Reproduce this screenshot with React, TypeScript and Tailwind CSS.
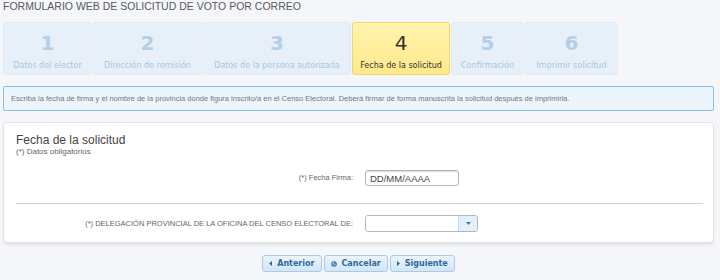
const steps = [
  { n: '1', label: 'Datos del elector', w: 'w-[89px]' },
  { n: '2', label: 'Dirección de remisión', w: 'w-[109px]' },
  { n: '3', label: 'Datos de la persona autorizada', w: 'w-[148px]' },
  { n: '4', label: 'Fecha de la solicitud', w: 'w-[98px]', active: true },
  { n: '5', label: 'Confirmación', w: 'w-[73px]' },
  { n: '6', label: 'Imprimir solicitud', w: 'w-[93px]' },
];

const arial = { fontFamily: '"Liberation Sans", Arial, sans-serif' };
const verdana = { fontFamily: '"DejaVu Sans", Verdana, sans-serif' };

function NavButton({ icon, label }: { icon: React.ReactNode; label: string }) {
  return (
    <button
      className="h-[17px] flex items-center gap-[5px] px-[6px] rounded-[3px] border border-[#a9cbe8] bg-gradient-to-b from-[#eaf4fc] to-[#d3e6f6] text-[#2d6a9c] text-[8px] font-bold"
      style={verdana}
    >
      {icon}
      {label}
    </button>
  );
}

export default function App() {
  return (
    <div className="w-[720px] h-[280px] bg-[#f4f6f9] overflow-hidden px-[3px]" style={arial}>
      <h1 className="text-[10.5px] leading-[12px] text-[#5a5a5a] uppercase">
        Formulario web de solicitud de voto por correo
      </h1>

      {/* Steps */}
      <div className="mt-[10px] flex gap-[1px]">
        {steps.map((s) => (
          <div
            key={s.n}
            className={`${s.w} h-[53px] rounded-[3px] border flex flex-col items-center ${
              s.active
                ? 'border-[#f2d66a] bg-gradient-to-b from-[#fff3ad] to-[#ffe98a] text-[#333]'
                : 'border-[#e0ebf6] bg-[#e7f0f9] text-[#b3cfe7]'
            }`}
          >
            <span className={`mt-[10px] text-[20px] leading-[20px] ${s.active ? 'font-normal' : 'font-bold'}`} style={verdana}>
              {s.n}
            </span>
            <span className={`mt-[8px] text-[8px] leading-[10px] whitespace-nowrap ${s.active ? 'text-[#333]' : 'text-[#a6c6e1]'}`} style={verdana}>
              {s.label}
            </span>
          </div>
        ))}
      </div>

      {/* Info */}
      <div className="mt-[11px] w-[711px] h-[25px] rounded-[2px] border border-[#84c2ea] bg-[#edf5fc] px-[7px] flex items-center text-[7.5px] text-[#777]">
        Escriba la fecha de firma y el nombre de la provincia donde figura inscrito/a en el Censo Electoral. Deberá firmar de forma manuscrita la solicitud después de imprimirla.
      </div>

      {/* Card */}
      <div className="mt-[11px] w-[711px] h-[121px] rounded-[4px] border border-[#e2e2e2] bg-white shadow-[0_2px_2px_rgba(0,0,0,0.08)] px-[12px]">
        <div className="pt-[10px] text-[12px] leading-[14px] text-[#444]">Fecha de la solicitud</div>
        <div className="text-[8px] leading-[10px] text-[#666]">(*) Datos obligatorios</div>

        <div className="mt-[13px] flex items-center">
          <div className="w-[337px] text-right text-[7.5px] text-[#666]">(*) Fecha Firma:</div>
          <input
            className="ml-[12px] w-[94px] h-[16px] rounded-[3px] border border-[#b6b6b6] px-[4px] text-[9.5px] text-[#444] outline-none shadow-[inset_0_1px_1px_rgba(0,0,0,0.15)]"
            style={arial}
            defaultValue="DD/MM/AAAA"
          />
        </div>

        <div className="mt-[17px] h-[1px] bg-[#bcd6ea] mr-[-2px]" />

        <div className="mt-[11px] flex items-center">
          <div className="w-[337px] text-right text-[7.5px] text-[#666] whitespace-nowrap">
            (*) DELEGACIÓN PROVINCIAL DE LA OFICINA DEL CENSO ELECTORAL DE:
          </div>
          <div className="ml-[12px] w-[113px] h-[17px] flex rounded-[3px] border border-[#b6b6b6] overflow-hidden shadow-[inset_0_1px_1px_rgba(0,0,0,0.15)]">
            <div className="flex-1 bg-white" />
            <div className="w-[19px] border-l border-[#c8d9e8] bg-[#e4eff9] flex items-center justify-center">
              <svg width="5" height="3" viewBox="0 0 5 3">
                <path d="M0 0h5L2.5 3z" fill="#3a78b0" />
              </svg>
            </div>
          </div>
        </div>
      </div>

      {/* Buttons */}
      <div className="mt-[12px] flex justify-center gap-[2px] pr-[3px]">
        <NavButton
          label="Anterior"
          icon={
            <svg width="3" height="5" viewBox="0 0 3 5">
              <path d="M3 0v5L0 2.5z" fill="#2d6a9c" />
            </svg>
          }
        />
        <NavButton
          label="Cancelar"
          icon={
            <svg width="6" height="6" viewBox="0 0 7 7">
              <circle cx="3.5" cy="3.5" r="2.6" fill="none" stroke="#2d6a9c" strokeWidth="1.3" />
              <path d="M1.7 5.3L5.3 1.7" stroke="#2d6a9c" strokeWidth="1.3" />
            </svg>
          }
        />
        <NavButton
          label="Siguiente"
          icon={
            <svg width="3" height="5" viewBox="0 0 3 5">
              <path d="M0 0v5L3 2.5z" fill="#2d6a9c" />
            </svg>
          }
        />
      </div>
    </div>
  );
}
